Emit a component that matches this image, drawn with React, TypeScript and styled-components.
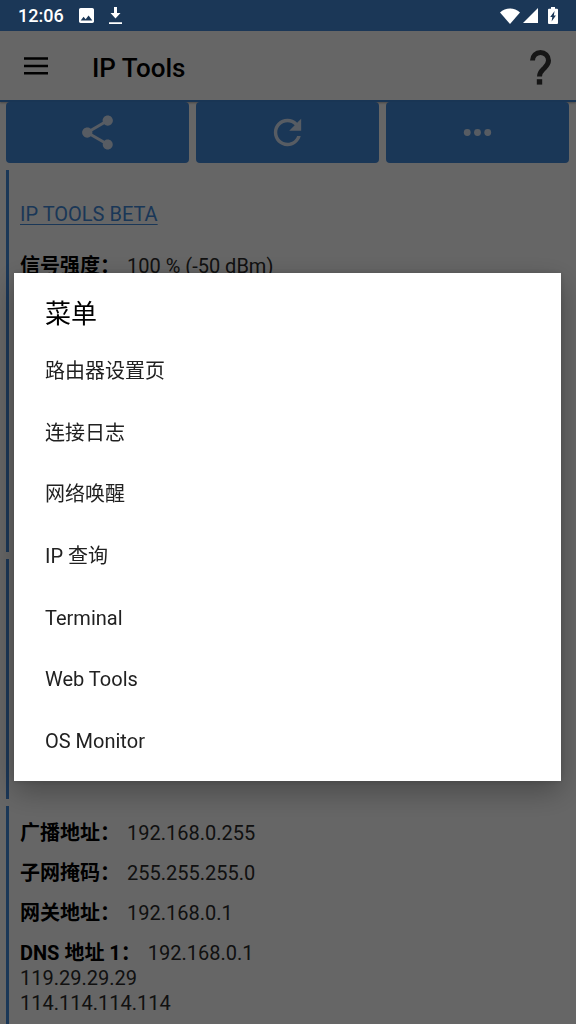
import React from 'react';
import styled, { createGlobalStyle } from 'styled-components';

const BLUE = '#4389d9';

const GlobalStyle = createGlobalStyle`
  *, *::before, *::after { box-sizing: border-box; }
  body {
    margin: 0;
    background: #fff;
    color: #000;
    font-family: Roboto, 'Noto Sans CJK SC', sans-serif;
    font-size: 20px;
    line-height: 25px;
  }
  button { font: inherit; color: inherit; cursor: pointer; }
`;

const Page = styled.div`
  display: flex;
  flex-direction: column;
  min-height: 100vh;
`;

const StatusBar = styled.div`
  position: relative;
  z-index: 3;
  display: flex;
  align-items: center;
  justify-content: space-between;
  height: 31px;
  padding: 0 18px;
  background: #1b3757;
  color: #fff;
`;

const StatusGroup = styled.div<{ $gap: number }>`
  display: flex;
  align-items: center;
  gap: ${(p) => p.$gap}px;
  svg { display: block; fill: currentColor; }
`;

const Clock = styled.span`
  font-size: 18px;
  font-weight: 500;
  line-height: 30px;
`;

const AppBar = styled.header`
  display: flex;
  align-items: center;
  height: 71px;
  padding: 0 14px 0 15px;
  border-bottom: 2px solid #3f85d3;
  box-shadow: 0 1px 2px rgba(0, 0, 0, 0.3);
`;

const AppTitle = styled.h1`
  flex: 1;
  margin: 5px 0 0 36px;
  font-size: 26px;
  font-weight: 500;
  line-height: 30px;
`;

const IconButton = styled.button`
  display: flex;
  padding: 0;
  border: 0;
  background: none;
  svg { display: block; }
`;

const Toolbar = styled.div`
  display: grid;
  grid-template-columns: repeat(3, 1fr);
  gap: 7px;
  padding: 0 7px 0 6px;
`;

const ToolButton = styled.button`
  display: flex;
  align-items: center;
  justify-content: center;
  height: 61px;
  padding: 0;
  border: 0;
  border-radius: 4px;
  background: ${BLUE};
  svg { display: block; fill: rgba(255, 255, 255, 0.8); }
`;

const Cards = styled.main`
  flex: 1;
  display: flex;
  flex-direction: column;
  gap: 7px;
  padding: 7px 6px 0;
`;

const Card = styled.section<{ $minHeight?: number; $grow?: boolean }>`
  display: flex;
  flex-direction: column;
  gap: 15px;
  flex-grow: ${(p) => (p.$grow ? 1 : 0)};
  min-height: ${(p) => p.$minHeight ?? 0}px;
  padding: 15px 10px 8px 11px;
  border-left: 3px solid ${BLUE};
`;

const BetaLink = styled.a`
  align-self: flex-start;
  margin: 17px 0 12px;
  color: ${BLUE};
  text-decoration: underline;
  text-decoration-thickness: 1px;
  text-underline-offset: 3px;
`;

const Field = styled.div`
  color: #2b2b2b;
`;

const Label = styled.b`
  margin-right: 7px;
  color: #000;
  font-weight: 700;
`;

const ExtraLine = styled.div``;

const Scrim = styled.div`
  position: fixed;
  inset: 0;
  z-index: 2;
  display: flex;
  align-items: center;
  padding: 30px 15px 0 14px;
  background: rgba(0, 0, 0, 0.6);
`;

const Dialog = styled.div`
  flex: 1;
  padding-bottom: 9px;
  background: #fff;
  box-shadow: 0 10px 28px rgba(0, 0, 0, 0.3), 0 0 6px rgba(0, 0, 0, 0.15);
`;

const DialogTitle = styled.h2`
  margin: 0;
  padding: 26px 31px 12px;
  font-size: 26px;
  font-weight: 400;
  line-height: 30px;
`;

const MenuList = styled.ul`
  display: grid;
  grid-auto-rows: 1fr;
  min-height: 431px;
  margin: 0;
  padding: 0;
  list-style: none;
`;

const MenuItem = styled.button`
  display: block;
  width: 100%;
  height: 100%;
  padding: 0 31px;
  border: 0;
  background: none;
  color: #212121;
  text-align: left;
`;

const menuItems = ['路由器设置页', '连接日志', '网络唤醒', 'IP 查询', 'Terminal', 'Web Tools', 'OS Monitor'];

const addresses = [
  { label: '广播地址：', values: ['192.168.0.255'] },
  { label: '子网掩码：', values: ['255.255.255.0'] },
  { label: '网关地址：', values: ['192.168.0.1'] },
  { label: 'DNS 地址 1：', values: ['192.168.0.1', '119.29.29.29', '114.114.114.114'] },
];

export default function App() {
  return (
    <>
      <GlobalStyle />
      <Page>
        <StatusBar>
          <StatusGroup $gap={15}>
            <Clock>12:06</Clock>
            <svg width="15" height="15" viewBox="3 3 18 18">
              <path d="M21 19V5c0-1.100-.9-2-2-2H5c-1.100 0-2 .9-2 2v14c0 1.100.9 2 2 2h14c1.100 0 2-.9 2-2zM8.500 13.500l2.500 3.010L14.500 12l4.500 6H5l3.500-4.500z" />
            </svg>
            <svg width="13" height="17" viewBox="0 0 13 17">
              <path d="M5 0h3v6h3.500L6.500 11.500 1.500 6H5zM0 15.300h13V17H0z" />
            </svg>
          </StatusGroup>
          <StatusGroup $gap={3}>
            <svg width="20" height="16" viewBox="0 0 20 16">
              <path d="M10 16 0 4.500C2.800 2 6.200.500 10 .500S17.200 2 20 4.500z" />
            </svg>
            <svg width="15" height="15" viewBox="0 0 15 15">
              <path d="M15 0v15H0z" />
            </svg>
            <svg width="17" height="17" viewBox="-7 0 17 17">
              <path
                fillRule="evenodd"
                d="M3 0h4v1.700h2q1 0 1 1V16q0 1-1 1H1q-1 0-1-1V2.700q0-1 1-1h2zM6.600 4 2.200 10H4.300L3.600 14.500 7.900 8.400H5.800z"
              />
            </svg>
          </StatusGroup>
        </StatusBar>

        <AppBar>
          <IconButton aria-label="导航">
            <svg width="41" height="41" viewBox="0 0 41 41">
              <path d="M9 12.300h24v2.500H9zM9 19.700h24v2.500H9zM9 27h24v2.500H9z" />
            </svg>
          </IconButton>
          <AppTitle>IP Tools</AppTitle>
          <IconButton aria-label="帮助">
            <svg width="44" height="44" viewBox="0 0 44 44" fill="none">
              <path
                d="M14.500 16.500a8 8 0 0 1 16 0c0 3.300-1.600 5-4 7.400-3 3-5 4.300-5 8.600"
                stroke="#363636"
                strokeWidth="5"
              />
              <path d="M18.800 35.200h5.400v5.400h-5.400z" fill="#363636" />
            </svg>
          </IconButton>
        </AppBar>

        <Toolbar>
          <ToolButton aria-label="分享">
            <svg width="41" height="41" viewBox="0 0 24 24">
              <path d="M18 16.080c-.76 0-1.440.3-1.960.77L8.910 12.700c.05-.23.09-.46.09-.7s-.04-.47-.09-.7l7.050-4.110c.54.5 1.250.81 2.040.81 1.660 0 3-1.340 3-3s-1.340-3-3-3-3 1.340-3 3c0 .24.04.47.09.7L8.040 9.810C7.500 9.310 6.790 9 6 9c-1.660 0-3 1.340-3 3s1.340 3 3 3c.79 0 1.500-.31 2.040-.81l7.120 4.160c-.05.21-.08.43-.08.65 0 1.610 1.310 2.920 2.920 2.920s2.920-1.310 2.920-2.920-1.310-2.920-2.920-2.920z" />
            </svg>
          </ToolButton>
          <ToolButton aria-label="刷新">
            <svg width="41" height="41" viewBox="0 0 24 24">
              <path d="M17.650 6.350C16.200 4.900 14.210 4 12 4c-4.420 0-7.990 3.580-7.990 8s3.570 8 7.990 8c3.730 0 6.840-2.550 7.730-6h-2.080c-.82 2.330-3.040 4-5.650 4-3.310 0-6-2.690-6-6s2.690-6 6-6c1.660 0 3.140.69 4.220 1.780L13 11h7V4l-2.350 2.350z" />
            </svg>
          </ToolButton>
          <ToolButton aria-label="更多">
            <svg width="41" height="41" viewBox="0 0 24 24">
              <circle cx="6" cy="12" r="2" />
              <circle cx="12" cy="12" r="2" />
              <circle cx="18" cy="12" r="2" />
            </svg>
          </ToolButton>
        </Toolbar>

        <Cards>
          <Card $minHeight={382}>
            <BetaLink href="#beta">IP TOOLS BETA</BetaLink>
            <Field>
              <Label>信号强度：</Label>
              100 % (-50 dBm)
            </Field>
          </Card>
          <Card $minHeight={240} />
          <Card $grow>
            {addresses.map(({ label, values: [first, ...rest] }) => (
              <Field key={label}>
                <Label>{label}</Label>
                {first}
                {rest.map((value) => (
                  <ExtraLine key={value}>{value}</ExtraLine>
                ))}
              </Field>
            ))}
          </Card>
        </Cards>
      </Page>

      <Scrim>
        <Dialog role="dialog" aria-modal="true" aria-labelledby="menu-title">
          <DialogTitle id="menu-title">菜单</DialogTitle>
          <MenuList>
            {menuItems.map((item) => (
              <li key={item}>
                <MenuItem>{item}</MenuItem>
              </li>
            ))}
          </MenuList>
        </Dialog>
      </Scrim>
    </>
  );
}
